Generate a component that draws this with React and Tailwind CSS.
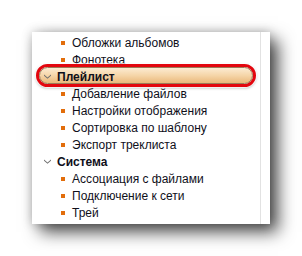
import React from "react";

const font = { fontFamily: '"Liberation Sans", Arial, sans-serif' };

function Bullet({ children }) {
  return (
    <div className="h-[17px] flex items-center pl-[29px]">
      <span className="w-[4px] h-[4px] bg-[#e26d0b] shrink-0" />
      <span className="ml-[7px] text-[12px] leading-none text-[#0f0f1a] whitespace-nowrap">{children}</span>
    </div>
  );
}

function Chevron() {
  return (
    <svg width="7" height="5" viewBox="0 0 7 5" className="shrink-0 block">
      <path d="M0 0.5 L3.5 3.5 L7 0.5 L7 1.8 L3.5 4.8 L0 1.8 Z" fill="#6f6f6f" />
    </svg>
  );
}

function Header({ children, selected }) {
  return (
    <div className="relative h-[17px] flex items-center pl-[12px]">
      {selected && (
        <div className="absolute left-[4px] top-[-4px] w-[220px] h-[23px] rounded-full border-[3px] border-[#e3060e] shadow-[0_0_1px_1px_rgba(255,255,255,0.8),0_1px_3px_rgba(0,0,0,0.35)]">
          <div className="w-full h-full rounded-full border border-[#9b7b58] bg-gradient-to-b from-[#fcebd2] via-[#f5d5a8] to-[#eab87a]" />
        </div>
      )}
      <span className="relative"><Chevron /></span>
      <span className="relative ml-[6px] text-[12px] leading-none font-bold text-[#0f0f1a] whitespace-nowrap">{children}</span>
    </div>
  );
}

export default function App() {
  return (
    <div className="w-[302px] h-[256px] bg-white overflow-hidden pt-[32px] pl-[32px]" style={font}>
      <div className="w-[238px] h-[192px] bg-white flex shadow-[0_0_10px_rgba(0,0,0,0.22),8px_8px_16px_rgba(0,0,0,0.7)]">
        <div className="flex-1 pt-[2px]">
          <Bullet>Обложки альбомов</Bullet>
          <Bullet>Фонотека</Bullet>
          <Header selected>Плейлист</Header>
          <Bullet>Добавление файлов</Bullet>
          <Bullet>Настройки отображения</Bullet>
          <Bullet>Сортировка по шаблону</Bullet>
          <Bullet>Экспорт треклиста</Bullet>
          <Header>Система</Header>
          <Bullet>Ассоциация с файлами</Bullet>
          <Bullet>Подключение к сети</Bullet>
          <Bullet>Трей</Bullet>
        </div>
        <div className="w-[10px] border-l border-[#e2e2e2]" />
      </div>
    </div>
  );
}
